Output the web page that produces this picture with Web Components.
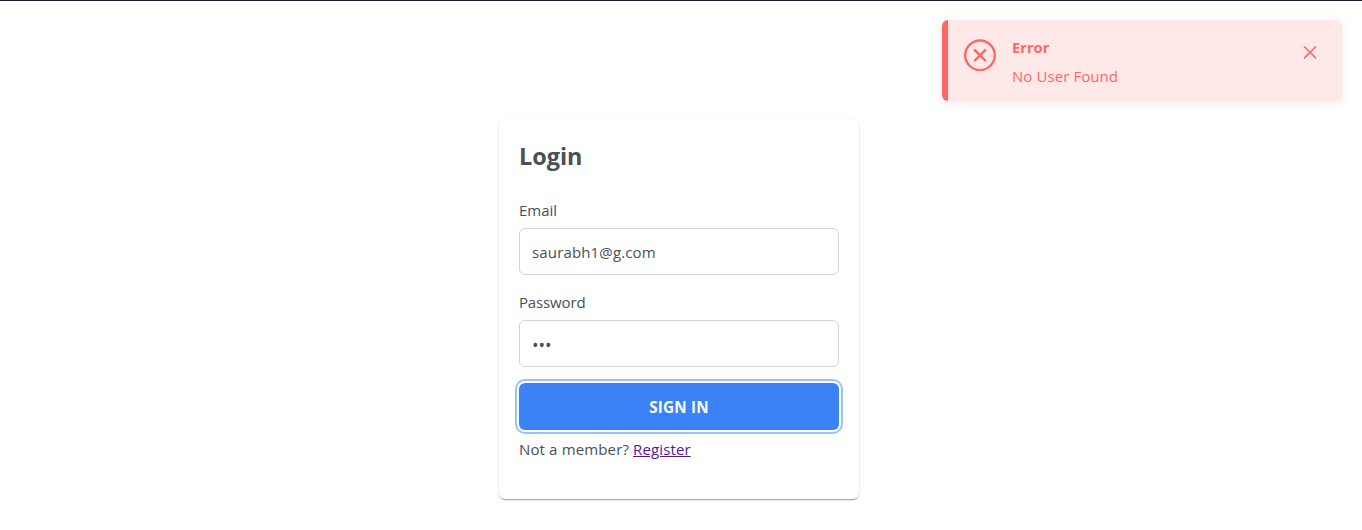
<!DOCTYPE html>
<html lang="en">
<head>
<meta charset="utf-8">
<title>Login</title>
<style>
html, body { margin: 0; height: 100%; }
body { background: #fff; color: #495057; font: 15px/24px "Open Sans", "Noto Sans", sans-serif; overflow: hidden; }
</style>
</head>
<body>
<login-page></login-page>
<script>
const define = (name, html) => customElements.define(name, class extends HTMLElement {
  constructor() {
    super();
    this.attachShadow({ mode: 'open' }).innerHTML = html;
  }
});

define('toast-message', `
<style>
:host { display: flex; align-items: flex-start; box-sizing: border-box; width: 400px; height: 81.4px; padding: 16px;
  border-left: 6px solid #ff6767; border-radius: 6px; background: #ffe8e8; color: #ff6767; box-shadow: 0 2px 12px rgba(0,0,0,.08); }
svg { display: block; fill: none; stroke: currentColor; stroke-linecap: round; }
.icon { margin: 3.3px 16px 0 0; }
.text { flex: 1; padding-top: 1px; }
.title { font-weight: 700; font-size: 14.7px; line-height: 21px; }
.detail { margin-top: 8px; line-height: 21px; letter-spacing: .08px; }
button { display: grid; place-items: center; width: 32px; height: 32px; padding: 0; border: 0; background: none; color: inherit; }
</style>
<svg class="icon" width="32" height="32" viewBox="0 0 32 32" stroke-width="2.4"><circle cx="16" cy="16.3" r="14.8"/><path d="M10.8 11.1 21.2 21.5M21.2 11.1 10.8 21.5"/></svg>
<div class="text"><div class="title"><slot name="title"></slot></div><div class="detail"><slot></slot></div></div>
<button aria-label="Close"><svg width="14" height="14" viewBox="0 0 14 14" stroke-width="1.5"><path d="M1.4 1.7 12.6 12.9M12.6 1.7 1.4 12.9"/></svg></button>`);

define('form-field', `
<style>
:host { display: block; height: 92px; }
.label { height: 30px; line-height: 24px; }
.box { box-sizing: border-box; height: 47px; padding: 0 12px; border: 1px solid #ced4da; border-radius: 6px; line-height: 47px; }
</style>
<div class="label"><slot name="label"></slot></div>
<div class="box"><slot></slot></div>`);

define('primary-button', `
<style>
:host { display: block; }
button { display: block; width: 100%; height: 47px; padding: 2px 0 0; border: 0; border-radius: 6px; background: #3b82f6; color: #fff;
  font: inherit; font-size: 15.2px; letter-spacing: .2px; font-weight: 700; line-height: 45px; box-shadow: 0 0 0 2px #fff, 0 0 0 4px #9dc1fb; }
</style>
<button><slot></slot></button>`);

define('login-card', `
<style>
:host { display: block; box-sizing: border-box; width: 360px; height: 380px; padding: 20px; border-radius: 6px; background: #fff;
  box-shadow: 0 2px 1px -1px rgba(0,0,0,.2), 0 1px 1px rgba(0,0,0,.14), 0 1px 3px rgba(0,0,0,.12); }
h2 { margin: 0 0 22px; font-size: 23.4px; line-height: 35px; height: 35px; }
.email { letter-spacing: .15px; }
.password { letter-spacing: -.15px; }
.fields { padding-top: 2px; margin-bottom: 1px; }
.dots { display: block; font-size: 17.5px; line-height: 48px; letter-spacing: -.1px; }
p { margin: 7px 0 0; line-height: 24px; letter-spacing: .14px; }
a { color: #551a8b; text-decoration: underline; }
</style>
<h2>Login</h2>
<div class="fields">
<form-field><span slot="label">Email</span><span class="email">saurabh1@g.com</span></form-field>
<form-field><span class="password" slot="label">Password</span><span class="dots">•••</span></form-field>
</div>
<primary-button>SIGN IN</primary-button>
<p>Not a member? <a href="#">Register</a></p>`);

define('login-page', `
<style>
:host { display: flex; flex-direction: column; box-sizing: border-box; height: 530px; border-top: 1px solid #1f1b2b; }
toast-message { align-self: flex-end; margin: 19px 20px 17.6px 0; }
login-card { margin-left: 499px; }
</style>
<toast-message><span slot="title">Error</span>No User Found</toast-message>
<login-card></login-card>`);
</script>
</body>
</html>
